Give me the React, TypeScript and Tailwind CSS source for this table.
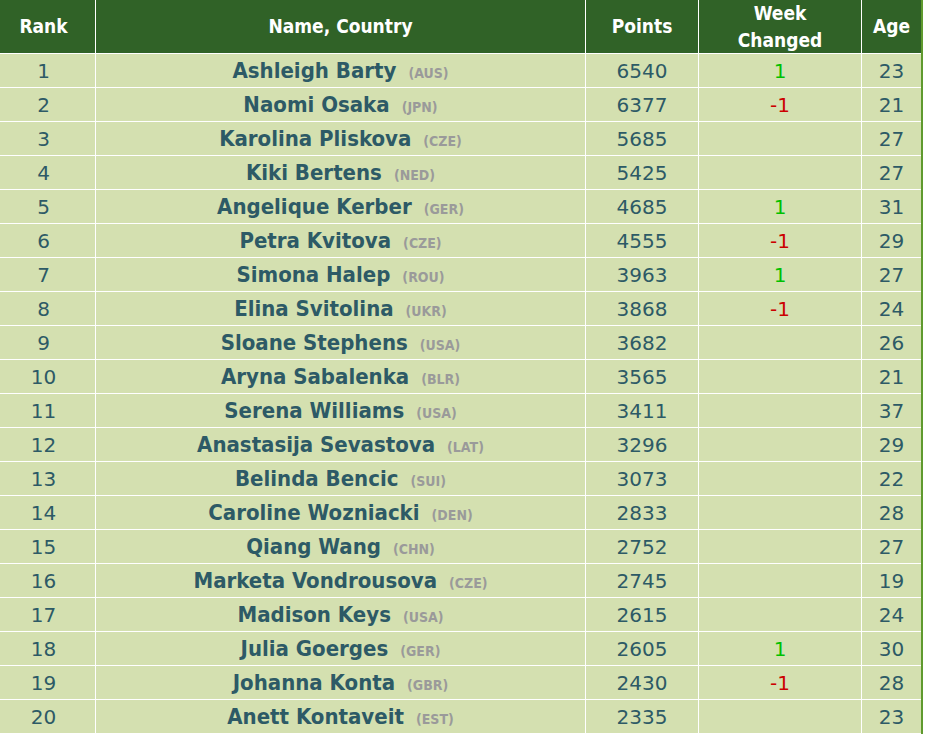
const ROWS: [number, string, string, number, number | null, number][] = [
  [1, "Ashleigh Barty", "AUS", 6540, 1, 23],
  [2, "Naomi Osaka", "JPN", 6377, -1, 21],
  [3, "Karolina Pliskova", "CZE", 5685, null, 27],
  [4, "Kiki Bertens", "NED", 5425, null, 27],
  [5, "Angelique Kerber", "GER", 4685, 1, 31],
  [6, "Petra Kvitova", "CZE", 4555, -1, 29],
  [7, "Simona Halep", "ROU", 3963, 1, 27],
  [8, "Elina Svitolina", "UKR", 3868, -1, 24],
  [9, "Sloane Stephens", "USA", 3682, null, 26],
  [10, "Aryna Sabalenka", "BLR", 3565, null, 21],
  [11, "Serena Williams", "USA", 3411, null, 37],
  [12, "Anastasija Sevastova", "LAT", 3296, null, 29],
  [13, "Belinda Bencic", "SUI", 3073, null, 22],
  [14, "Caroline Wozniacki", "DEN", 2833, null, 28],
  [15, "Qiang Wang", "CHN", 2752, null, 27],
  [16, "Marketa Vondrousova", "CZE", 2745, null, 19],
  [17, "Madison Keys", "USA", 2615, null, 24],
  [18, "Julia Goerges", "GER", 2605, 1, 30],
  [19, "Johanna Konta", "GBR", 2430, -1, 28],
  [20, "Anett Kontaveit", "EST", 2335, null, 23],
];

const cell = "flex items-center justify-center border-r border-white";
const cond = "font-['DejaVu_Sans_Condensed','DejaVu_Sans',sans-serif]";

export default function App() {
  return (
    <div className="w-[923px] border-r-2 border-[#5f9a2e] bg-white font-['DejaVu_Sans',sans-serif]">
      <div className={`flex h-[54px] bg-[#306227] border-b border-white text-white font-bold text-[19px] leading-[27px] ${cond}`}>
        <div className={`${cell} w-[96px] pr-[8px]`}>Rank</div>
        <div className={`${cell} w-[490px]`}>Name, Country</div>
        <div className={`${cell} w-[113px]`}>Points</div>
        <div className={`${cell} w-[163px] flex-col text-center`}>
          <span>Week</span>
          <span>Changed</span>
        </div>
        <div className="flex items-center justify-center flex-1">Age</div>
      </div>
      {ROWS.map(([rank, name, country, points, change, age]) => (
        <div
          key={rank}
          className="flex h-[34px] bg-[#d4e0b0] border-b border-white text-[#2d5a66] text-[20px]"
        >
          <div className={`${cell} w-[96px] pr-[8px]`}>{rank}</div>
          <div className={`flex items-baseline justify-center border-r border-white pt-[2px] w-[490px] gap-[12px] font-bold ${cond}`}>
            <span className="text-[22px] leading-[30px]">{name}</span>
            <span className="text-[14px] text-[#9a9a9a]">({country})</span>
          </div>
          <div className={`${cell} w-[113px]`}>{points}</div>
          <div
            className={`${cell} w-[163px] ${
              change === 1 ? "text-[#00c000]" : "text-[#cc0000]"
            }`}
          >
            {change}
          </div>
          <div className="flex items-center justify-center flex-1">{age}</div>
        </div>
      ))}
    </div>
  );
}
